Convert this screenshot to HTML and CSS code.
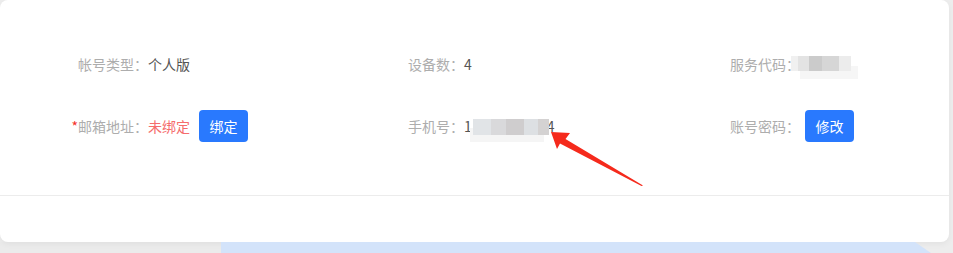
FILE: index.html
```html
<!DOCTYPE html>
<html lang="zh">
<head>
<meta charset="utf-8">
<link rel="stylesheet" href="styles.css">
</head>
<body>
<div class="card">
  <div class="grid">
    <div class="cell">
      <span class="label">帐号类型：</span>
      <span class="value">个人版</span>
    </div>
    <div class="cell">
      <span class="label">设备数：</span>
      <span class="value">4</span>
    </div>
    <div class="cell">
      <span class="label">服务代码：</span>
      <span class="blur blur-code">
        <i class="b b1"></i><i class="b b2"></i><i class="b b3"></i><i class="b b4"></i><i class="b b5"></i>
      </span>
    </div>
    <div class="cell">
      <span class="label"><span class="req">*</span>邮箱地址：</span>
      <span class="value warn">未绑定</span>
      <button class="btn">绑定</button>
    </div>
    <div class="cell">
      <span class="label">手机号：</span>
      <span class="value">1</span>
      <span class="blur blur-phone">
        <i class="p p1"></i><i class="p p2"></i><i class="p p3"></i><i class="p p4"></i><i class="p p5"></i>
      </span>
      <span class="value four">4</span>
    </div>
    <div class="cell">
      <span class="label">账号密码：</span>
      <button class="btn btn-tight">修改</button>
    </div>
  </div>
  <div class="footer"></div>
  <svg class="arrow" width="953" height="253" viewBox="0 0 953 253">
    <path d="M551,132 L570,133 L565.5,139 L643,185.5 L641.5,186 L560,143.5 L557,149 Z" fill="#f52a1c"/>
  </svg>
</div>
<div class="deco">
  <div class="deco-gray"></div>
  <div class="deco-blue"></div>
</div>
</body>
</html>
```

FILE: styles.css
```css
html, body {
  margin: 0;
  padding: 0;
}
body {
  width: 953px;
  height: 253px;
  overflow: hidden;
  background: #ededed;
  font-family: "Noto Sans CJK SC", "Noto Sans", sans-serif;
  font-size: 14px;
}
.card {
  position: relative;
  width: 949px;
  height: 242px;
  background: #fff;
  border-radius: 8px;
  box-shadow: 0 2px 6px rgba(0, 0, 0, 0.05);
  box-sizing: border-box;
}
.grid {
  display: grid;
  grid-template-columns: 316px 336px 1fr;
  grid-auto-rows: 32px;
  row-gap: 30px;
  padding-top: 48px;
  padding-bottom: 53px;
  border-bottom: 1px solid #ececec;
}
.cell {
  display: flex;
  align-items: center;
  line-height: 20px;
}
.label {
  width: 148px;
  flex-shrink: 0;
  text-align: right;
  color: #adadad;
}
.req {
  color: #f5312a;
}
.value {
  color: #555;
}
.warn {
  color: #f56c6c;
}
.four {
  margin-left: -2px;
}
.btn {
  height: 32px;
  width: 49px;
  margin-left: 9px;
  padding: 0;
  border: none;
  border-radius: 4px;
  background: #2979fe;
  color: #fff;
  font-family: inherit;
  font-size: 14px;
  line-height: 32px;
}
.btn-tight {
  margin-left: 5px;
}
.blur {
  display: flex;
  flex-direction: row;
  position: relative;
}
.blur-code {
  margin-left: -9px;
  height: 15px;
  margin-top: -2px;
  box-shadow: 8px 9px 0 -1px #f6f6f6;
}
.b {
  display: block;
  height: 15px;
}
.b1 { width: 7px; background: #f0f0f0; }
.b2 { width: 11px; background: #e3e3e3; }
.b3 { width: 13px; background: #cbcbcb; }
.b4 { width: 17px; background: #d6d6d6; }
.b5 { width: 12px; background: #ececec; }
.blur-phone {
  height: 16px;
  margin-left: 1px;
  margin-top: 2px;
  box-shadow: -4px 8px 0 -1px #f5f5f5;
}
.p {
  display: block;
  height: 16px;
}
.p1 { width: 18px; background: #e1e4e7; }
.p2 { width: 15px; background: #d9d9db; }
.p3 { width: 18px; background: #cfcdce; }
.p4 { width: 14px; background: #dde0e3; }
.p5 { width: 11px; background: #d4d2d2; }
.footer {
  height: 46px;
}
.arrow {
  position: absolute;
  left: 0;
  top: 0;
  pointer-events: none;
}
.deco {
  display: flex;
  height: 11px;
}
.deco-gray {
  width: 221px;
  background: #ebebeb;
}
.deco-blue {
  width: 710px;
  background: #d3e3fa;
  clip-path: polygon(0 0, 694px 0, 100% 100%, 0 100%);
}
```
